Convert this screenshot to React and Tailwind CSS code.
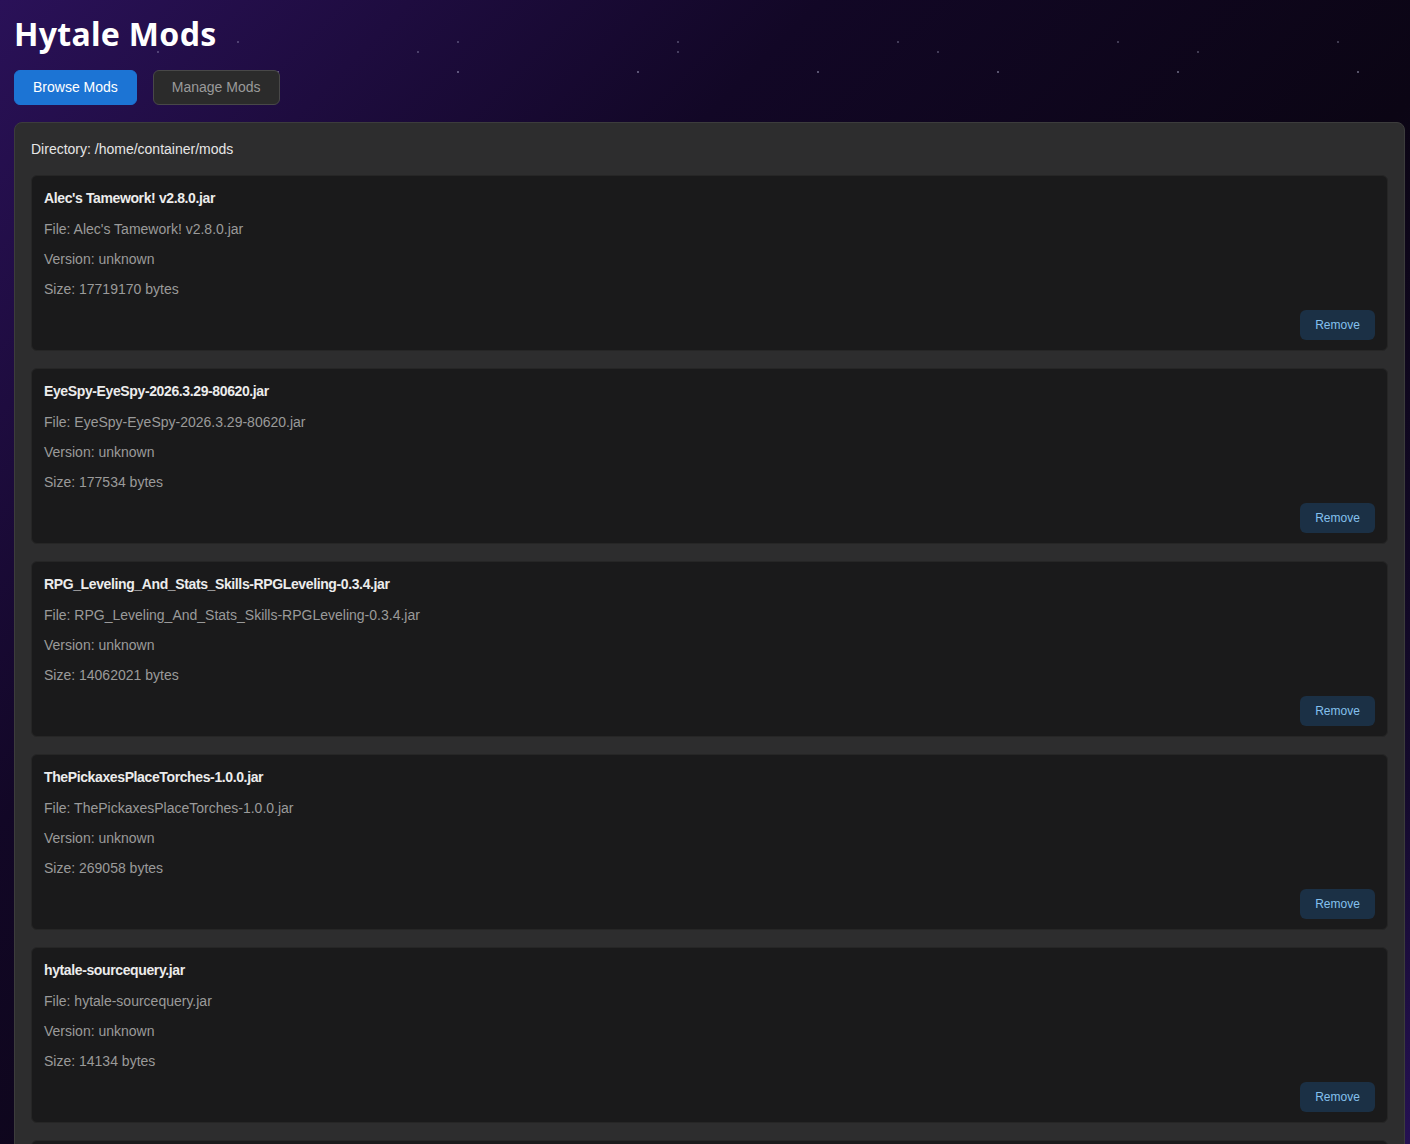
import React, { useState } from "react";

const mods = [
  { name: "Alec's Tamework! v2.8.0.jar", size: 17719170 },
  { name: "EyeSpy-EyeSpy-2026.3.29-80620.jar", size: 177534 },
  { name: "RPG_Leveling_And_Stats_Skills-RPGLeveling-0.3.4.jar", size: 14062021 },
  { name: "ThePickaxesPlaceTorches-1.0.0.jar", size: 269058 },
  { name: "hytale-sourcequery.jar", size: 14134 },
  { name: "another-mod.jar", size: 1024 },
];

// --- SUB-COMPONENT: ModCard ---
function ModCard({ mod, onRemove }) {
  return (
    <div className="bg-[#1a1a1b] border border-[#262626] rounded-md pt-[12px] px-3 pb-[10px] flex flex-col">
      <h3 className="text-[14px] leading-[20px] font-bold text-[#ececec] tracking-[-0.38px]">{mod.name}</h3>
      <p className="mt-[11px] text-[14px] leading-[20px] text-[#9a9a9a]">File: {mod.name}</p>
      <p className="mt-[10px] text-[14px] leading-[20px] text-[#9a9a9a]">Version: unknown</p>
      <p className="mt-[10px] text-[14px] leading-[20px] text-[#9a9a9a]">Size: {mod.size} bytes</p>
      <div className="flex justify-end mt-[11px]">
        <button
          onClick={onRemove}
          className="h-[30px] w-[75px] rounded-md bg-[#1b3045] text-[#85c0ee] text-[12px] cursor-pointer"
        >
          Remove
        </button>
      </div>
    </div>
  );
}

export default function App() {
  const [tab, setTab] = useState("manage");
  const [list, setList] = useState(mods);

  return (
    <div
      className="min-h-screen w-full relative overflow-hidden font-['Liberation_Sans',Arial,sans-serif] bg-[linear-gradient(135deg,#2a1158_0%,#120726_30%,#0b0514_55%,#140a2c_80%,#2e1566_100%)]"
    >
      {/* --- STARS --- */}
      <div className="absolute inset-x-0 top-0 h-[130px] pointer-events-none bg-[radial-gradient(circle_at_98px_72px,rgba(200,200,230,0.4)_1px,transparent_1.5px),radial-gradient(circle_at_18px_42px,rgba(200,200,230,0.28)_1px,transparent_1.5px),radial-gradient(circle_at_158px_52px,rgba(200,200,230,0.28)_1px,transparent_1.5px)] bg-[size:180px_200px,220px_200px,260px_200px]"></div>

      <div className="relative pl-[14px] pr-[5px] pt-[14px]">
        <h1 className="text-[32px] leading-[40px] font-bold text-white font-['Noto_Sans',sans-serif] tracking-[0.3px]">Hytale Mods</h1>

        <div className="flex gap-4 mt-[16px]">
          <button
            onClick={() => setTab("browse")}
            className="h-[35px] px-[18px] rounded-md bg-[#1c74d4] text-white text-[14px] border border-[#1c74d4] cursor-pointer"
          >
            Browse Mods
          </button>
          <button
            onClick={() => setTab("manage")}
            className="h-[35px] px-[18px] rounded-md bg-[#2b2b2b] text-[#9a9a9a] text-[14px] border border-[#484848] cursor-pointer"
          >
            Manage Mods
          </button>
        </div>

        <div className="mt-[17px] bg-[#2d2d2e] border border-[#3c3c3c] rounded-lg px-4 pt-4 pb-4">
          <p className="text-[14px] leading-[20px] text-[#e6e6e6]">Directory: /home/container/mods</p>
          <div className="mt-[16px] flex flex-col gap-[17px]">
            {list.map((m, i) => (
              <ModCard key={i} mod={m} onRemove={() => setList(list.filter((_, j) => j !== i))} />
            ))}
          </div>
        </div>
      </div>
    </div>
  );
}
